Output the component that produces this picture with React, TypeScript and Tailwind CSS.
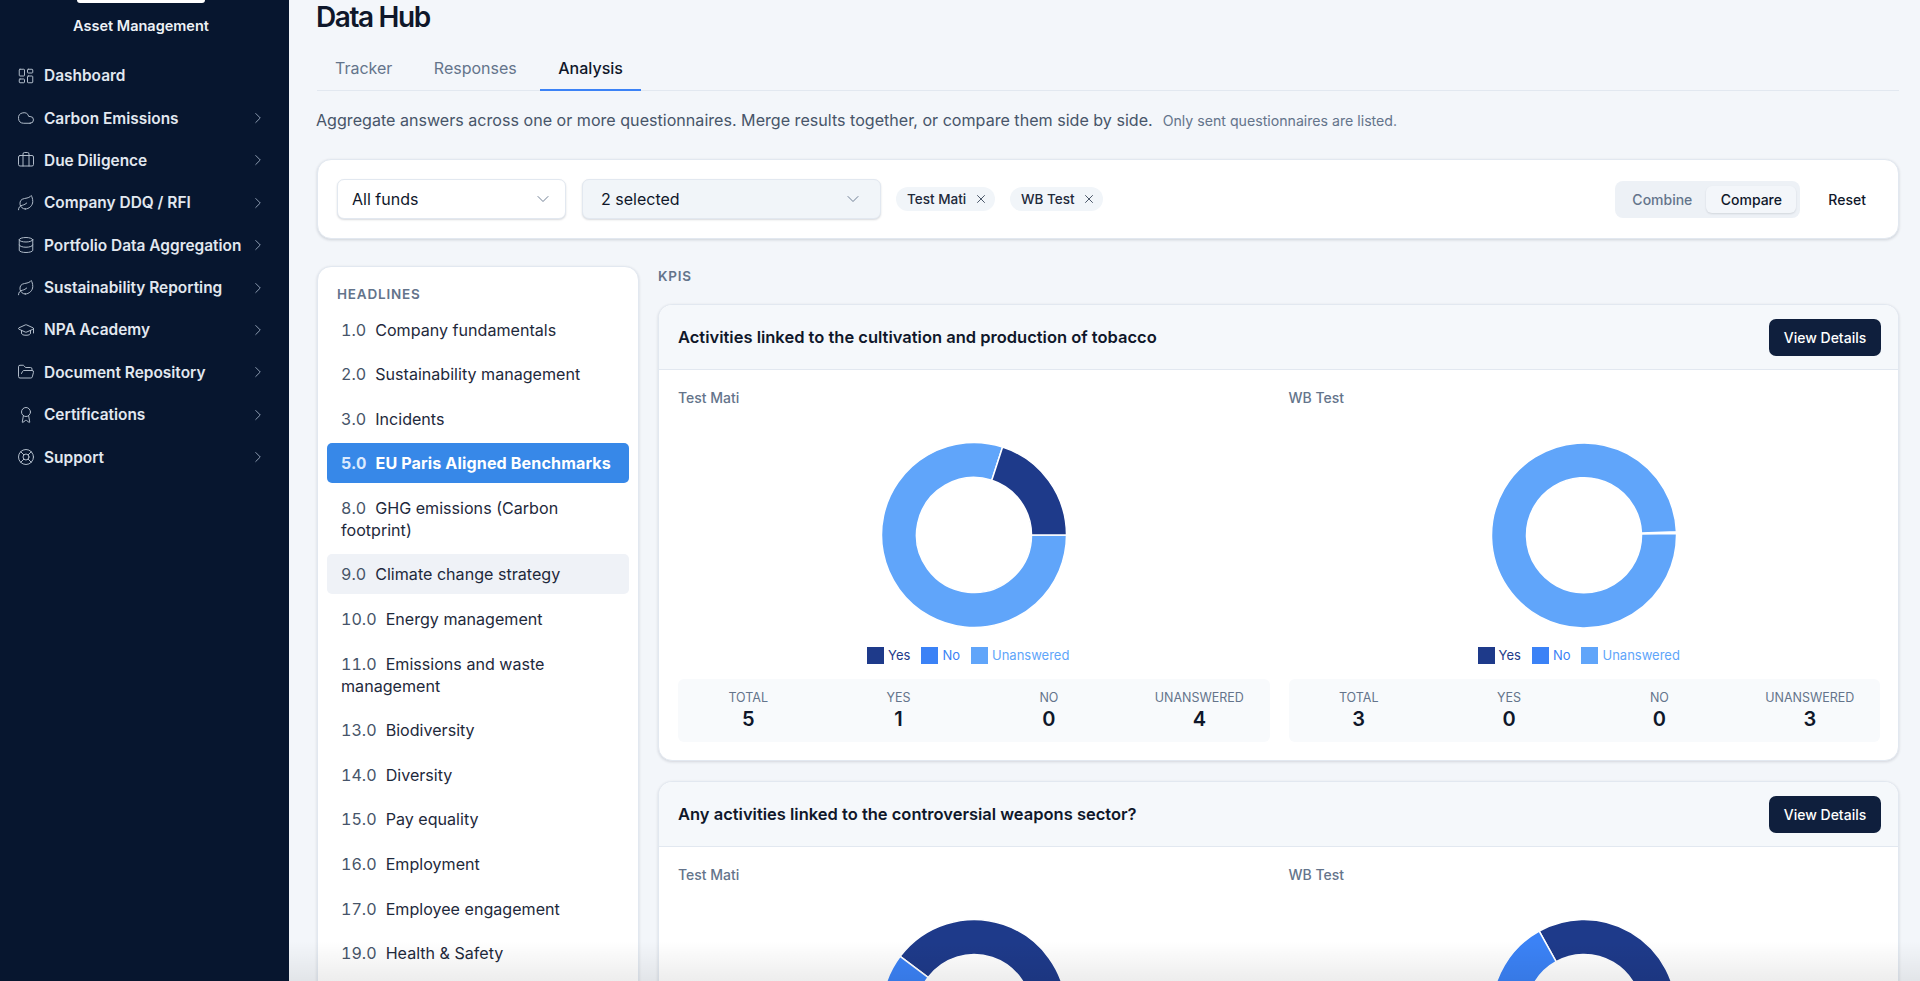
import React from "react";
import {
  LayoutDashboard, Cloud, Briefcase, Leaf, Database, GraduationCap, FolderOpen, Award, LifeBuoy,
  ChevronRight, ChevronDown, X,
} from "lucide-react";

const nav = [
  { label: "Dashboard", Icon: LayoutDashboard, chev: false },
  { label: "Carbon Emissions", Icon: Cloud, chev: true },
  { label: "Due Diligence", Icon: Briefcase, chev: true },
  { label: "Company DDQ / RFI", Icon: Leaf, chev: true },
  { label: "Portfolio Data Aggregation", Icon: Database, chev: true },
  { label: "Sustainability Reporting", Icon: Leaf, chev: true },
  { label: "NPA Academy", Icon: GraduationCap, chev: true },
  { label: "Document Repository", Icon: FolderOpen, chev: true },
  { label: "Certifications", Icon: Award, chev: true },
  { label: "Support", Icon: LifeBuoy, chev: true },
];

const headlines: { n: string; t: string; state?: "active" | "hover" }[] = [
  { n: "1.0", t: "Company fundamentals" },
  { n: "2.0", t: "Sustainability management" },
  { n: "3.0", t: "Incidents" },
  { n: "5.0", t: "EU Paris Aligned Benchmarks", state: "active" },
  { n: "8.0", t: "GHG emissions (Carbon footprint)" },
  { n: "9.0", t: "Climate change strategy", state: "hover" },
  { n: "10.0", t: "Energy management" },
  { n: "11.0", t: "Emissions and waste management" },
  { n: "13.0", t: "Biodiversity" },
  { n: "14.0", t: "Diversity" },
  { n: "15.0", t: "Pay equality" },
  { n: "16.0", t: "Employment" },
  { n: "17.0", t: "Employee engagement" },
  { n: "19.0", t: "Health & Safety" },
];

const DARK = "#1e3a8a";
const MID = "#3b82f6";
const LIGHT = "#60a5fa";

function arc(a0: number, a1: number) {
  // angles are degrees counter-clockwise from 3 o'clock, a1 > a0
  const R = 92.5, r = 57.5, c = 93;
  const p = (rad: number, a: number) => {
    const t = (a * Math.PI) / 180;
    return `${(c + rad * Math.cos(t)).toFixed(2)} ${(c - rad * Math.sin(t)).toFixed(2)}`;
  };
  const large = a1 - a0 > 180 ? 1 : 0;
  return `M${p(R, a0)}A${R} ${R} 0 ${large} 0 ${p(R, a1)}L${p(r, a1)}A${r} ${r} 0 ${large} 1 ${p(r, a0)}Z`;
}

function Donut({ segs }: { segs: { a0: number; a1: number; c: string }[] }) {
  return (
    <svg width="186" height="186" viewBox="0 0 186 186" className="block -m-px">
      {segs.map((s, i) => (
        <path key={i} d={arc(s.a0, s.a1)} fill={s.c} stroke="#ffffff" strokeWidth="1.5" />
      ))}
    </svg>
  );
}

function Legend() {
  const items = [
    { l: "Yes", c: "bg-[#1e3a8a]", t: "text-[#1e3a8a]" },
    { l: "No", c: "bg-[#3b82f6]", t: "text-[#3b82f6]" },
    { l: "Unanswered", c: "bg-[#60a5fa]", t: "text-[#60a5fa]" },
  ];
  return (
    <div className="flex justify-center gap-[11px] h-[17px] items-center pr-[11px]">
      {items.map((i) => (
        <div key={i.l} className="flex items-center gap-[4px]">
          <span className={`w-[17px] h-[17px] ${i.c}`} />
          <span className={`text-[13px] leading-[17px] ${i.t}`}>{i.l}</span>
        </div>
      ))}
    </div>
  );
}

function Stats({ v }: { v: number[] }) {
  const labels = ["TOTAL", "YES", "NO", "UNANSWERED"];
  return (
    <div className="grid grid-cols-4 gap-[34px] px-[12px] h-[63px] mt-[15.5px] rounded-[6px] bg-[#f8fafc] items-center">
      {labels.map((l, i) => (
        <div key={l} className="text-center">
          <div className="text-[12.5px] leading-[17px] text-[#64748b]">{l}</div>
          <div className="text-[20px] leading-[27px] font-semibold text-[#0f172a]">{v[i]}</div>
        </div>
      ))}
    </div>
  );
}

function Column({ name, segs, stats, short }: {
  name: string;
  segs: { a0: number; a1: number; c: string }[];
  stats?: number[];
  short?: boolean;
}) {
  return (
    <div className="min-w-0">
      <div className="text-[14px] leading-[20px] text-[#64748b] font-medium">{name}</div>
      <div className="flex justify-center mt-[35px]">
        <Donut segs={segs} />
      </div>
      {!short && (
        <>
          <div className="mt-[19.5px]">
            <Legend />
          </div>
          {stats && <Stats v={stats} />}
        </>
      )}
    </div>
  );
}

function KpiCard({ title, children }: { title: string; children: React.ReactNode }) {
  return (
    <section className="rounded-[14px] border border-[#e2e8f0] bg-white shadow-[0_1px_3px_rgba(15,23,42,0.14)] overflow-hidden shrink-0">
      <header className="h-[65px] flex items-center justify-between pl-[19px] pr-[17px] bg-[#f5f8fb] border-b border-[#e2e8f0]">
        <h3 className="text-[16.5px] font-semibold text-[#0f172a]">{title}</h3>
        <button className="h-[37px] w-[112px] rounded-[7px] bg-[#0f1f3d] text-white text-[14px] font-medium">View Details</button>
      </header>
      <div className="grid grid-cols-2 gap-[19px] pl-[19px] pr-[18px] pt-[18px] pb-[18px]">{children}</div>
    </section>
  );
}

export default function App() {
  return (
    <div className="relative flex h-[981px] w-[1920px] overflow-hidden bg-[#f3f6fa] font-['Inter',sans-serif]">
      <aside className="w-[289px] shrink-0 bg-[#07162f] text-[#e2e8f0]">
        <div className="w-[282px]">
          <div className="mx-auto h-[3px] w-[128px] rounded-b-[4px] bg-white" />
          <div className="mt-[14px] text-center text-[14.5px] leading-[18px] font-semibold text-[#eef2f7]">Asset Management</div>
        </div>
        <nav className="mt-[19.5px]">
          {nav.map(({ label, Icon, chev }) => (
            <div key={label} className="flex h-[42.4px] items-center pl-[17px] pr-[22px]">
              <Icon size={18} strokeWidth={1.3} className="shrink-0 text-[#b4bfcd]" />
              <span className="ml-[9px] flex-1 whitespace-nowrap text-[15.45px] font-semibold text-[#e2e8f0]">{label}</span>
              {chev && <ChevronRight size={18} strokeWidth={1.25} className="shrink-0 text-[#94a3b8]" />}
            </div>
          ))}
        </nav>
      </aside>

      <main className="flex-1 min-w-0 pl-[28px] pr-[21px]">
        <h1 className="h-[34px] -ml-px text-[28px] leading-[34px] font-semibold tracking-[-1.4px] text-[#0f172a]">Data Hub</h1>
        <div className="mt-[10px] flex h-[47px] gap-[5.5px] border-b-[1.5px] border-[#e2e8f0]">
          <div className="h-[47px] px-[18px] pt-[12px] text-[16px] text-[#64748b]">Tracker</div>
          <div className="h-[47px] px-[18px] pt-[12px] text-[16px] text-[#64748b]">Responses</div>
          <div className="h-[47px] px-[18px] pt-[12px] text-[16px] font-medium text-[#0f172a] border-b-2 border-[#3b82f6]">Analysis</div>
        </div>
        <p className="mt-[17px] -ml-px h-[24px] text-[16.1px] leading-[24px] text-[#475569] whitespace-nowrap">
          Aggregate answers across one or more questionnaires. Merge results together, or compare them side by side.
          <span className="ml-[10px] text-[14.15px] text-[#64748b]">Only sent questionnaires are listed.</span>
        </p>

        <div className="mt-[27px] flex h-[80px] items-center rounded-[14px] border border-[#e2e8f0] bg-white pl-[19px] pr-[18px] shadow-[0_1px_3px_rgba(15,23,42,0.16)]">
          <div className="flex h-[40px] w-[229px] items-center justify-between rounded-[7px] border border-[#e2e8f0] bg-white pl-[14px] pr-[12px] shadow-[0_1px_2px_rgba(15,23,42,0.16)]">
            <span className="text-[16px] text-[#0f172a]">All funds</span>
            <ChevronDown size={20} strokeWidth={1.1} className="text-[#64748b]" />
          </div>
          <div className="ml-[16px] flex h-[40px] w-[299px] items-center justify-between rounded-[7px] border border-[#e2e8f0] bg-[#f1f5f9] pl-[18px] pr-[17px] shadow-[0_1px_2px_rgba(15,23,42,0.16)]">
            <span className="text-[16px] text-[#0f172a]">2 selected</span>
            <ChevronDown size={20} strokeWidth={1.1} className="text-[#64748b]" />
          </div>
          <div className="ml-[15px] flex h-[24px] w-[99px] items-center justify-between rounded-full bg-[#f1f5f9] pl-[11px] pr-[7px]">
            <span className="text-[13.5px] font-medium text-[#1e293b]">Test Mati</span>
            <X size={14} strokeWidth={1.5} className="text-[#334155]" />
          </div>
          <div className="ml-[15px] flex h-[24px] w-[93px] items-center justify-between rounded-full bg-[#f1f5f9] pl-[11px] pr-[7px]">
            <span className="text-[13.5px] font-medium text-[#1e293b]">WB Test</span>
            <X size={14} strokeWidth={1.5} className="text-[#334155]" />
          </div>
          <div className="ml-auto flex h-[37px] w-[185px] items-center rounded-[8px] bg-[#edf1f6] pl-[17px] pr-[4px]">
            <span className="text-[14px] font-medium text-[#64748b]">Combine</span>
            <span className="ml-auto flex h-[27px] w-[90px] items-center justify-center rounded-[6px] bg-[#f3f6fa] text-[14px] font-medium text-[#0f172a] shadow-[0_1px_2px_rgba(15,23,42,0.12)]">Compare</span>
          </div>
          <span className="ml-[28px] mr-[14px] text-[14px] font-medium text-[#0f172a]">Reset</span>
        </div>

        <div className="mt-[27px] flex gap-[19px] items-start">
          <div className="h-[800px] w-[322px] shrink-0 rounded-[14px] border border-[#e2e8f0] bg-white px-[9px] pt-[9px] shadow-[0_1px_3px_rgba(15,23,42,0.14)]">
            <div className="mt-[8.5px] pl-[10px] text-[13.5px] leading-[18px] font-semibold tracking-[0.8px] text-[#64748b]">HEADLINES</div>
            <ul className="mt-[7px] flex flex-col gap-[4.6px]">
              {headlines.map((h) => (
                <li
                  key={h.n}
                  className={`rounded-[5px] px-[14px] py-[9px] text-[16.1px] leading-[22px] ${
                    h.state === "active"
                      ? "bg-[#3788e8] text-white font-bold tracking-[0.12px]"
                      : h.state === "hover"
                        ? "bg-[#eff2f7] text-[#1e293b]"
                        : "text-[#1e293b]"
                  }`}
                >
                  <span className={`tabular-nums mr-[9px] ${h.state === "active" ? "text-[#dbeafe]" : "text-[#475569]"}`}>{h.n}</span>
                  <span>{h.t}</span>
                </li>
              ))}
            </ul>
          </div>

          <div className="flex-1 min-w-0">
            <div className="h-[18px] mt-[1px] text-[13.5px] leading-[18px] font-semibold tracking-[0.8px] text-[#64748b]">KPIS</div>
            <div className="mt-[19px] flex flex-col gap-[20px]">
              <KpiCard title="Activities linked to the cultivation and production of tobacco">
                <Column
                  name="Test Mati"
                  segs={[{ a0: 72, a1: 360, c: LIGHT }, { a0: 0, a1: 72, c: DARK }]}
                  stats={[5, 1, 0, 4]}
                />
                <Column
                  name="WB Test"
                  segs={[{ a0: 2, a1: 361, c: LIGHT }]}
                  stats={[3, 0, 0, 3]}
                />
              </KpiCard>
              <KpiCard title="Any activities linked to the controversial weapons sector?">
                <Column
                  name="Test Mati"
                  short
                  segs={[{ a0: 0, a1: 143, c: DARK }, { a0: 143, a1: 195, c: MID }, { a0: 195, a1: 360, c: LIGHT }]}
                />
                <Column
                  name="WB Test"
                  short
                  segs={[{ a0: 0, a1: 119, c: DARK }, { a0: 119, a1: 180, c: MID }, { a0: 180, a1: 360, c: LIGHT }]}
                />
              </KpiCard>
            </div>
          </div>
        </div>
      </main>

      <div className="pointer-events-none absolute bottom-0 left-[289px] right-0 h-[40px] bg-gradient-to-b from-transparent to-[rgba(0,0,0,0.07)]" />
    </div>
  );
}
